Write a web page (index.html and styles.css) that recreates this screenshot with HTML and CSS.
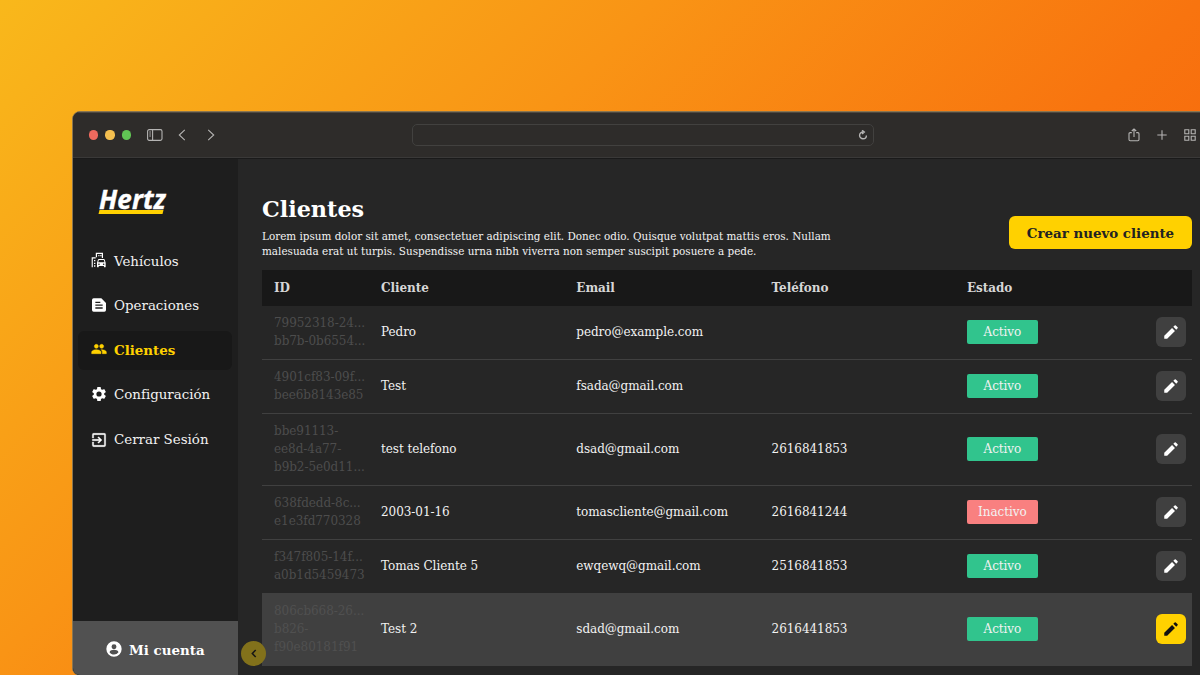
FILE: index.html
```html
<!DOCTYPE html>
<html lang="es">
<head>
<meta charset="utf-8">
<title>Clientes</title>
<link rel="stylesheet" href="styles.css">
</head>
<body>
<svg class="defs" width="0" height="0">
<symbol id="pencil" viewBox="0 0 24 24"><path d="M3 17.100V21h3.900L17.300 10.500l-3.900-3.900L3 17.100zM20.800 7.100a1.100 1.100 0 0 0 0-1.500l-2.400-2.400a1.100 1.100 0 0 0-1.500 0l-1.800 1.800 3.900 3.900 1.800-1.800z"/></symbol>
</svg>
<div class="window">
  <header class="toolbar">
    <div class="lights"><i class="red"></i><i class="amber"></i><i class="green"></i></div>
    <svg class="tool panel" width="16" height="12" viewBox="0 0 16 12"><rect x=".6" y=".6" width="14.4" height="10.8" rx="1.6"/><path d="M5.6.6v10.8M2.3 3h1.6M2.3 5h1.6M2.3 7h1.6"/></svg>
    <svg class="tool back" width="8" height="12" viewBox="0 0 8 12"><path d="M6.800.800 1.300 6l5.500 5.200"/></svg>
    <svg class="tool forward" width="8" height="12" viewBox="0 0 8 12"><path d="M1.200.800 6.700 6l-5.500 5.200"/></svg>
    <div class="address"><svg width="10" height="10" viewBox="0 0 10 10"><path d="M5 2A3.4 3.4 0 1 0 8.4 5.4M4.1.3 6.3 2.1 4.1 3.9"/></svg></div>
    <div class="tools">
      <svg class="tool" width="12" height="14" viewBox="0 0 12 14"><path d="M3.8 4.6H2.2Q1 4.6 1 5.8v5.8q0 1.2 1.2 1.2h7.6q1.2 0 1.2-1.2V5.8q0-1.2-1.2-1.2H8.2M6 9V1M3.8 3 6 .9 8.2 3"/></svg>
      <svg class="tool" width="10" height="10" viewBox="0 0 10 10"><path d="M5 .3v9.4M.3 5h9.4"/></svg>
      <svg class="tool" width="12" height="12" viewBox="0 0 12 12"><path d="M.8.8h4v4h-4zM7.2.8h4v4h-4zM.8 7.2h4v4h-4zM7.2 7.2h4v4h-4z"/></svg>
    </div>
  </header>
  <div class="app">
    <aside class="sidebar">
      <div class="logo"><span>Hertz</span></div>
      <nav>
        <a class="item"><svg viewBox="0 0 24 24"><path d="M20.6 11.6c-.2-.6-.8-1-1.4-1h-7.4c-.6 0-1.200.4-1.400 1L9 16v6c0 .5.4 1 1 1h.6c.6 0 1-.5 1-1v-1h7.800v1c0 .5.4 1 1 1h.6c.5 0 1-.5 1-1v-6zm-8.800.500h7.400l1 3.100h-9.400zM12 19.500a1.200 1.200 0 1 1 0-2.400 1.200 1.200 0 0 1 0 2.400zm7 0a1.200 1.200 0 1 1 0-2.400 1.200 1.200 0 0 1 0 2.400zM18 9h-1.800V3H9v5H7.200V1H18zM7 8v1.700H2.700V23H1V8zM11 4.500h1.600v1.800H11zm3 0h1.600v1.800H14zM4.500 12h2v2h-2zm0 4h2v2h-2zm0 4h2v2h-2z"/></svg><span>Vehículos</span></a>
        <a class="item"><svg viewBox="0 0 24 24"><path fill-rule="evenodd" d="M15.500 2H4a2.500 2.500 0 0 0-2.500 2.500v15A2.500 2.500 0 0 0 4 22h16a2.500 2.500 0 0 0 2.500-2.500V9zM6.500 7H14v2H6.500zm11 10.500h-11v-2h11zm0-4.200h-11v-2h11z"/></svg><span>Operaciones</span></a>
        <a class="item active"><svg viewBox="0 0 24 24"><path d="M16 11c1.660 0 2.990-1.340 2.990-3S17.660 5 16 5s-3 1.340-3 3 1.340 3 3 3zm-8 0c1.660 0 2.990-1.340 2.990-3S9.660 5 8 5 5 6.340 5 8s1.340 3 3 3zm0 2c-2.330 0-7 1.170-7 3.500V19h14v-2.500C15 14.170 10.330 13 8 13zm8 0c-.29 0-.62.020-.97.050C16.190 13.890 17 15.020 17 16.500V19h6v-2.500c0-2.330-4.670-3.500-7-3.500z" stroke="#ffd100" stroke-width=".7"/></svg><span>Clientes</span></a>
        <a class="item"><svg viewBox="1 1 22 22"><path d="M19.140 12.940c.04-.3.060-.61.060-.94s-.02-.64-.07-.94l2.030-1.580a.49.49 0 0 0 .12-.61l-1.920-3.320a.49.49 0 0 0-.59-.22l-2.390.96a7 7 0 0 0-1.620-.94l-.36-2.540A.48.48 0 0 0 13.920 2.400h-3.840a.47.47 0 0 0-.47.410l-.36 2.540c-.59.240-1.130.57-1.620.94l-2.390-.96a.47.47 0 0 0-.59.220L2.740 8.870a.47.47 0 0 0 .12.610l2.030 1.580a6 6 0 0 0-.02 1.880l-2.030 1.580a.49.49 0 0 0-.12.610l1.920 3.320c.12.220.37.290.59.220l2.390-.96c.5.380 1.030.7 1.620.94l.36 2.540c.05.240.24.410.48.410h3.840c.24 0 .44-.17.470-.41l.36-2.540a7 7 0 0 0 1.620-.94l2.390.96c.22.080.47 0 .59-.22l1.920-3.320a.47.47 0 0 0-.12-.61zM12 15.600a3.600 3.600 0 1 1 0-7.200 3.600 3.600 0 0 1 0 7.200z"/></svg><span>Configuración</span></a>
        <a class="item"><svg class="exit" viewBox="0 0 24 24"><path d="M10.090 15.590 11.500 17l5-5-5-5-1.410 1.410L12.670 11H2v2h10.670zM20 2H4a2 2 0 0 0-2 2v5h2V4h16v16H4v-5H2v5a2 2 0 0 0 2 2h16a2 2 0 0 0 2-2V4a2 2 0 0 0-2-2z" stroke="currentColor" stroke-width=".5"/></svg><span>Cerrar Sesión</span></a>
      </nav>
      <div class="account"><svg viewBox="0 0 24 24"><path fill-rule="evenodd" d="M12 .5a11.500 11.500 0 1 0 0 23 11.500 11.500 0 0 0 0-23zm0 4.300a3.700 3.700 0 1 1 0 7.400 3.700 3.700 0 0 1 0-7.400zm0 15.400c-2.700 0-5.200-1.300-6.700-3.500.1-2.200 4.500-3.400 6.700-3.400s6.600 1.200 6.700 3.400a8 8 0 0 1-6.700 3.500z"/></svg><span>Mi cuenta</span></div>
      <div class="collapse"><svg width="6" height="9" viewBox="0 0 6 9"><path d="M4.700 1 1.300 4.500 4.700 8"/></svg></div>
    </aside>
    <main>
      <div class="head">
        <div>
          <h1>Clientes</h1>
          <p>Lorem ipsum dolor sit amet, consectetuer adipiscing elit. Donec odio. Quisque volutpat mattis eros. Nullam<br>malesuada erat ut turpis. Suspendisse urna nibh viverra non semper suscipit posuere a pede.</p>
        </div>
        <button class="create">Crear nuevo cliente</button>
      </div>
      <div class="table">
        <div class="row th"><span>ID</span><span>Cliente</span><span>Email</span><span>Teléfono</span><span>Estado</span><span></span></div>
        <div class="row"><span class="id">79952318-24...<br>bb7b-0b6554...</span><span>Pedro</span><span>pedro@example.com</span><span></span><span class="badge">Activo</span><span class="edit"><svg><use href="#pencil"/></svg></span></div>
        <div class="row"><span class="id">4901cf83-09f...<br>bee6b8143e85</span><span>Test</span><span>fsada@gmail.com</span><span></span><span class="badge">Activo</span><span class="edit"><svg><use href="#pencil"/></svg></span></div>
        <div class="row"><span class="id">bbe91113-<br>ee8d-4a77-<br>b9b2-5e0d11...</span><span>test telefono</span><span>dsad@gmail.com</span><span>2616841853</span><span class="badge">Activo</span><span class="edit"><svg><use href="#pencil"/></svg></span></div>
        <div class="row"><span class="id">638fdedd-8c...<br>e1e3fd770328</span><span>2003-01-16</span><span>tomascliente@gmail.com</span><span>2616841244</span><span class="badge off">Inactivo</span><span class="edit"><svg><use href="#pencil"/></svg></span></div>
        <div class="row"><span class="id">f347f805-14f...<br>a0b1d5459473</span><span>Tomas Cliente 5</span><span>ewqewq@gmail.com</span><span>2516841853</span><span class="badge">Activo</span><span class="edit"><svg><use href="#pencil"/></svg></span></div>
        <div class="row hover"><span class="id">806cb668-26...<br>b826-<br>f90e80181f91</span><span>Test 2</span><span>sdad@gmail.com</span><span>2616441853</span><span class="badge">Activo</span><span class="edit"><svg><use href="#pencil"/></svg></span></div>
      </div>
    </main>
  </div>
</div>
</body>
</html>
```
FILE: styles.css
```css
* { box-sizing: border-box; }
body {
  margin: 0;
  width: 1200px;
  height: 675px;
  overflow: hidden;
  padding: 111px 0 0 72px;
  background: linear-gradient(135deg, #f9b81b 0%, #f99415 35%, #f8740f 64%, #f76b0d 75%, #f76b0d 100%);
  font-family: "DejaVu Serif", serif;
  color: #f2f2f2;
}
.defs { position: absolute; }
.window {
  width: 1160px;
  height: 565px;
  border: 1px solid #8a7650;
  border-radius: 8px;
  overflow: hidden;
  background: #262626;
  display: flex;
  flex-direction: column;
}
.toolbar {
  flex: none;
  height: 47px;
  background: #2e2c2a;
  border-bottom: 1px solid #1a1a1a;
  box-shadow: inset 0 1px #4d4841, inset 0 -1px #3a3938;
  display: flex;
  align-items: center;
  padding-left: 16px;
}
.lights { display: flex; gap: 7px; }
.lights i { width: 9.300px; height: 9.300px; border-radius: 50%; }
.red { background: #ed6a5e; }
.amber { background: #f4bf4f; }
.green { background: #61c554; }
.toolbar svg { fill: none; stroke: #b5b4b3; stroke-width: 1.100; flex: none; }
.panel { margin-left: 16px; }
.back { margin-left: 15px; }
.forward { margin-left: 21px; }
.address {
  margin-left: 197.600px;
  width: 462px;
  height: 22px;
  border: 1px solid #42413f;
  border-radius: 5px;
  display: flex;
  align-items: center;
  justify-content: flex-end;
  padding-right: 5px;
}
.address svg { stroke-width: 1.400; }
.tools { display: flex; align-items: center; margin-left: 254px; gap: 17px; }
.app { flex: 1; display: flex; min-height: 0; }
.sidebar {
  width: 165px;
  flex: none;
  background: #1e1e1e;
  display: flex;
  flex-direction: column;
  position: relative;
}
.logo {
  margin: 25px 0 0 26px;
  width: 70px;
  height: 30px;
  font: italic 700 26px/30px "Open Sans", sans-serif;
  letter-spacing: .1px;
  color: #fff;
}
.logo::after {
  content: "";
  display: block;
  width: 64px;
  height: 4px;
  margin-top: -1px;
  background: #ffd100;
  transform: skewX(-14deg);
}
.logo span { display: block; height: 27px; -webkit-text-stroke: .4px #fff; }
nav {
  margin: 27.500px 6px 0 5px;
  display: flex;
  flex-direction: column;
  gap: 5.600px;
}
.item {
  height: 39px;
  border-radius: 6px;
  display: flex;
  align-items: center;
  padding-left: 13px;
  gap: 7px;
  font-size: 13.400px;
  white-space: nowrap;
}
.item svg, .account svg { width: 16px; height: 16px; fill: #fff; color: #fff; flex: none; margin-bottom: 2px; }
.item .exit { margin-bottom: -1px; }
.item.active { background: #181818; color: #ffd100; font-weight: bold; }
.item.active svg { fill: #ffd100; }
.account {
  margin-top: auto;
  height: 54px;
  background: #515151;
  display: flex;
  align-items: center;
  padding: 3px 0 0 33px;
  gap: 7px;
  font-size: 13.400px;
  font-weight: bold;
  color: #fff;
}
.collapse {
  position: absolute;
  left: 168px;
  bottom: 9px;
  width: 25px;
  height: 25px;
  border-radius: 50%;
  background: #82711b;
  display: flex;
  align-items: center;
  justify-content: center;
}
.collapse svg { fill: none; stroke: #151515; stroke-width: 1.500; }
main { width: 954px; flex: none; padding: 36px 0 0 24px; }
.head { height: 75px; display: flex; justify-content: space-between; width: 930px; }
h1 { margin: 0; font-size: 22.300px; line-height: 28px; color: #fff; }
p { margin: 6px 0 0; font-size: 10.410px; line-height: 15px; white-space: nowrap; }
.create {
  width: 183px;
  height: 33px;
  margin-top: 21px;
  border: 0;
  border-radius: 6px;
  background: #ffd100;
  color: #222;
  font: bold 13.400px "DejaVu Serif", serif;
  padding: 1px 0 0;
}
.table { width: 930px; font-size: 12px; letter-spacing: -.055px; line-height: 18px; }
.row {
  display: grid;
  grid-template-columns: 107px 195.300px 195.300px 195.300px 189.100px 30px;
  align-items: center;
  padding: 8px 0 9px 12px;
  border-bottom: 1px solid #404040;
}
.row.th {
  height: 36px;
  padding-top: 0;
  padding-bottom: 0;
  border: 0;
  background: #181818;
  color: #d6d6d6;
  font-weight: bold;
}
.id { color: #4d4d4d; white-space: nowrap; }
.badge {
  width: 71px;
  height: 24px;
  line-height: 24px;
  border-radius: 2px;
  background: #31c48d;
  text-align: center;
}
.badge.off { background: #f98080; }
.edit {
  width: 30px;
  height: 30px;
  border-radius: 6px;
  background: #404040;
  display: flex;
  align-items: center;
  justify-content: center;
}
.edit svg { width: 18px; height: 18px; fill: #fff; }
.hover { background: #404040; }
.hover .id { color: #505050; }
.hover .edit { background: #ffd100; }
.hover .edit svg { fill: #111; }
```
